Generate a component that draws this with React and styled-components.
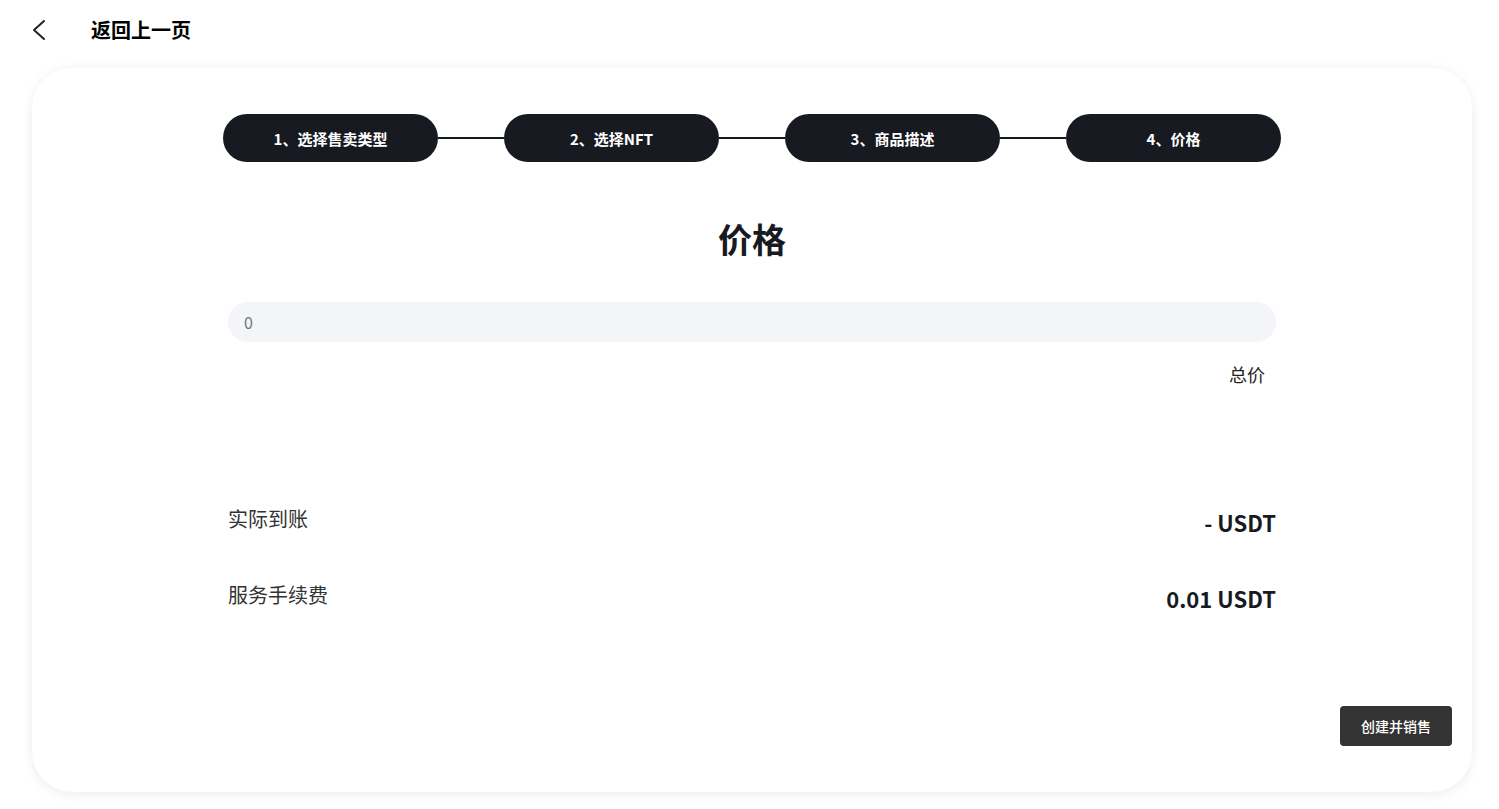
import React, { useState } from "react";
import styled, { createGlobalStyle } from "styled-components";

const GlobalStyle = createGlobalStyle`
  * { box-sizing: border-box; }
  body {
    margin: 0;
    background: #ffffff;
    font-family: "Noto Sans CJK SC", "Noto Sans", sans-serif;
    color: #181a22;
  }
`;

const steps = ["1、选择售卖类型", "2、选择NFT", "3、商品描述", "4、价格"];

const Page = styled.div`
  width: 1499px;
  padding: 0 27px 17px 32px;
`;

const Header = styled.div`
  height: 60px;
  display: flex;
  align-items: center;
  gap: 45px;
`;

const BackButton = styled.button`
  border: none;
  background: none;
  padding: 0;
  width: 14px;
  height: 22px;
  display: flex;
  cursor: pointer;
`;

const HeaderTitle = styled.h1`
  margin: 0;
  font-size: 20px;
  font-weight: 700;
  color: #000;
  line-height: 1;
`;

const Card = styled.div`
  margin-top: 8px;
  width: 1440px;
  height: 724px;
  border-radius: 40px;
  background: #fff;
  box-shadow: 0 2px 12px rgba(0, 0, 0, 0.08);
  padding: 46px 20px;
  display: flex;
  flex-direction: column;
`;

const Stepper = styled.div`
  align-self: center;
  display: flex;
  align-items: center;
`;

const StepPill = styled.div`
  width: 215px;
  height: 48px;
  border-radius: 24px;
  background: #181a22;
  color: #fff;
  font-size: 15px;
  font-weight: 700;
  display: flex;
  align-items: center;
  justify-content: center;
`;

const StepLine = styled.div`
  width: 66px;
  height: 2px;
  background: #181a22;
`;

const Content = styled.div`
  width: 1048px;
  align-self: center;
  display: flex;
  flex-direction: column;
`;

const Title = styled.h2`
  margin: 53px 0 0;
  height: 48px;
  line-height: 48px;
  text-align: center;
  font-size: 34px;
  font-weight: 700;
`;

const PriceInput = styled.input`
  margin-top: 39px;
  height: 40px;
  border: none;
  outline: none;
  border-radius: 20px;
  background: #f4f5f9;
  padding: 0 16px;
  font-family: inherit;
  font-size: 16px;
  color: #555a66;
`;

const TotalLabel = styled.div`
  margin-top: 20px;
  padding-right: 11px;
  text-align: right;
  font-size: 18px;
  line-height: 24px;
  color: #222;
`;

const Summary = styled.div`
  margin-top: 120px;
  display: flex;
  flex-direction: column;
  gap: 48px;
`;

const Row = styled.div`
  display: flex;
  justify-content: space-between;
  align-items: center;
  height: 28px;
`;

const RowLabel = styled.span`
  font-size: 20px;
  color: #333;
  margin-top: -4px;
`;

const RowValue = styled.span`
  font-size: 22px;
  font-weight: 700;
  color: #181a22;
  margin-top: 3px;
`;

const Footer = styled.div`
  margin-top: auto;
  display: flex;
  justify-content: flex-end;
`;

const SubmitButton = styled.button`
  width: 112px;
  height: 40px;
  border: none;
  border-radius: 4px;
  background: #333333;
  color: #fff;
  font-family: inherit;
  font-size: 14px;
  font-weight: 500;
  cursor: pointer;
`;

export default function App() {
  const [price, setPrice] = useState("");

  return (
    <Page>
      <GlobalStyle />
      <Header>
        <BackButton aria-label="back">
          <svg width="14" height="22" viewBox="0 0 14 22" fill="none">
            <polyline
              points="12,2 2,11 12,20"
              stroke="#222"
              strokeWidth="2"
              strokeLinecap="round"
              strokeLinejoin="round"
            />
          </svg>
        </BackButton>
        <HeaderTitle>返回上一页</HeaderTitle>
      </Header>
      <Card>
        <Stepper>
          {steps.map((s, i) => (
            <React.Fragment key={s}>
              {i > 0 && <StepLine />}
              <StepPill>{s}</StepPill>
            </React.Fragment>
          ))}
        </Stepper>
        <Content>
          <Title>价格</Title>
          <PriceInput
            placeholder="0"
            value={price}
            onChange={(e) => setPrice(e.target.value)}
          />
          <TotalLabel>总价</TotalLabel>
          <Summary>
            <Row>
              <RowLabel>实际到账</RowLabel>
              <RowValue>- USDT</RowValue>
            </Row>
            <Row>
              <RowLabel>服务手续费</RowLabel>
              <RowValue>0.01 USDT</RowValue>
            </Row>
          </Summary>
        </Content>
        <Footer>
          <SubmitButton>创建并销售</SubmitButton>
        </Footer>
      </Card>
    </Page>
  );
}
